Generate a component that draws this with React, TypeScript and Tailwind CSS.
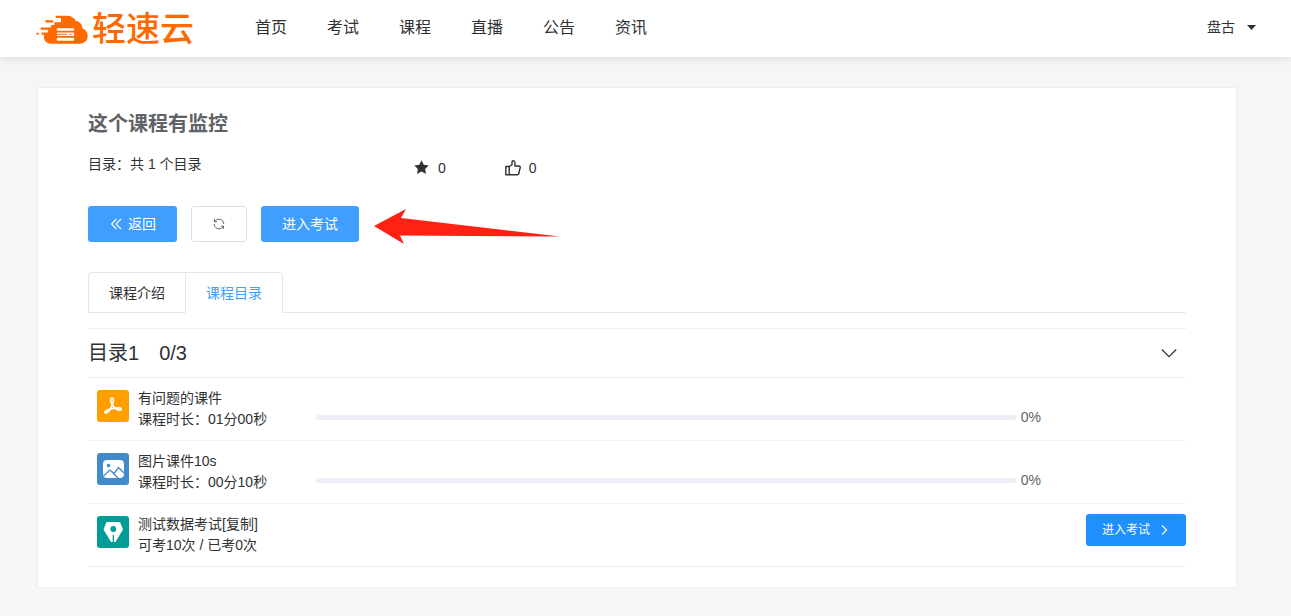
import React, { useState } from 'react';

const navItems = ['首页', '考试', '课程', '直播', '公告', '资讯'];

const lessons = [
  { id: 1, kind: 'pdf', title: '有问题的课件', detail: '课程时长：01分00秒', progress: 0 },
  { id: 2, kind: 'image', title: '图片课件10s', detail: '课程时长：00分10秒', progress: 0 },
  { id: 3, kind: 'exam', title: '测试数据考试[复制]', detail: '可考10次 / 已考0次', progress: null },
];

const Logo: React.FC = () => (
  <a href="#" className="flex items-center gap-1 pt-0.5 text-[#ff6a00]">
    <svg viewBox="47 44 156 88" className="h-[29px] w-[52px]" fill="none">
      <path
        fill="#ff6a00"
        d="M106 46H140C153 46 162 52 167 62C179 64 187 72 187 85C197 88 203 97 203 107C203 121 193 131 180 131H92C79 131 70 122 70 110V104H63V97H82V89H60V82H92V74H102V67H76V60H98V66H122V53H106Z"
      />
      <path stroke="#ff6a00" strokeWidth="6" d="M47 100.500H55M75 63H82" />
      <rect x="109" y="84" width="53" height="8" rx="3" fill="#fff" />
      <rect x="109" y="97" width="53" height="11" rx="3" fill="#fff" />
      <rect x="109" y="113" width="53" height="9" rx="3" fill="#fff" />
      <path stroke="#ff6a00" strokeWidth="3" d="M109 102.500H140M147 102.500H154" />
    </svg>
    <span className="text-[34px] leading-[40px] font-medium">轻速云</span>
  </a>
);

const StarIcon = () => (
  <svg viewBox="0 0 16 16" className="size-4" fill="#303133">
    <path d="M7.500.3l2.200 4.500 5 .7-3.600 3.500.9 5-4.500-2.400L3 14l.9-5L.3 5.500l5-.7z" />
  </svg>
);

const ThumbIcon = () => (
  <svg viewBox="0 0 16 16" className="size-4" fill="none" stroke="#303133" strokeWidth="1.400" strokeLinejoin="round">
    <path d="M.8 6.500h3.400v8.200H.8zM4.200 6.800L7 4.800V2.200C7 1.300 7.500.8 8.200.8c1.200 0 1.700.8 1.700 1.800V6h4c1 0 1.500.7 1.300 1.500l-1.400 6c-.2.800-.7 1.200-1.400 1.200H4.200" />
  </svg>
);

const BackIcon = () => (
  <svg viewBox="0 0 14 14" className="size-3.5" fill="none" stroke="currentColor" strokeWidth="1.100">
    <path d="M7.500 2L2.500 7l5 5M12 2L7 7l5 5" />
  </svg>
);

const RefreshIcon = () => (
  <svg viewBox="0 0 14 14" className="size-3.5" fill="none" stroke="#606266">
    <path d="M2.500 2.200v2.600h2.600M2.700 4.600C3.600 3 5.100 2.200 7 2.200c2.600 0 4.800 2.100 4.800 4.800M11.500 11.800V9.200H8.900M11.300 9.400C10.400 11 8.900 11.800 7 11.800 4.400 11.800 2.200 9.700 2.200 7" />
  </svg>
);

const ArrowMark = () => (
  <svg viewBox="0 0 188 36" className="h-9 w-[188px] overflow-visible" fill="#ff2113">
    <path d="M1 20L33 3L28 12L187 30.500L27 29.500L31 38Z" />
  </svg>
);

const LessonIcon: React.FC<{ kind: string }> = ({ kind }) => {
  if (kind === 'pdf') {
    return (
      <svg viewBox="0 0 32 32" className="size-8 rounded-[3px] bg-[#ffa000]" fill="none" stroke="#fff" strokeWidth="1.700">
        <path d="M14.800 14C13.500 11 13 8 15 8s1.800 3 .4 6.500C13.900 18.500 11.500 23 9 23c-2 0-1.200-2.300 3-3.600 3.500-1.200 7-1.900 10.200-1.500 3 .4 2.300 2.300.3 2.200-3.500-.2-6-3-7.700-6.100z" />
      </svg>
    );
  }
  if (kind === 'image') {
    return (
      <svg viewBox="0 0 32 32" className="size-8 rounded-[3px] bg-[#428bca]" fill="none">
        <rect x="6" y="7" width="21" height="18" rx="4" fill="#fff" />
        <circle cx="11.500" cy="12.500" r="1.800" fill="#428bca" />
        <path d="M6.500 23l6.500-6 4 3.500 4.500-6 5.500 5.500M15 19l6 6" stroke="#428bca" strokeWidth="1.300" />
      </svg>
    );
  }
  return (
    <svg viewBox="0 0 32 32" className="size-8 rounded-[3px] bg-[#009c95]" fill="#fff">
      <path d="M9.500 6H23l3 7.500L18.500 26H17v-7h-1.300v7H14L6.500 13.500z" />
      <circle cx="16.300" cy="13" r="2.900" fill="#009c95" />
    </svg>
  );
};

export default function App() {
  const [tab, setTab] = useState('catalog');
  const [open, setOpen] = useState(true);

  return (
    <div className="min-h-screen bg-[#f6f6f6] font-['Liberation_Sans','Noto_Sans_CJK_SC',sans-serif] text-sm text-[#303133]">
      <header className="flex h-[57px] items-center bg-white pr-[35px] pb-px pl-9 shadow-[0_2px_8px_rgba(0,0,0,0.1)]">
        <Logo />
        <nav className="ml-[61px] flex gap-10 text-base">
          {navItems.map((item) => (
            <a key={item} href="#" className="leading-6">
              {item}
            </a>
          ))}
        </nav>
        <button className="ml-auto flex items-center gap-3 pb-0.5">
          盘古
          <svg viewBox="0 0 9 5" className="h-[5px] w-[9px]" fill="#303133">
            <path d="M0 0h9L4.500 5z" />
          </svg>
        </button>
      </header>

      <div className="pt-[30px] pr-[17px] pb-7">
        <main className="mx-auto max-w-[1200px] border border-[#ebeef5] bg-white px-[50px] pt-[21px] pb-5">
          <h1 className="text-xl leading-[30px] font-bold text-[#606266]">这个课程有监控</h1>

          <div className="mt-[15px] flex items-start">
            <p className="w-[326px] leading-5">目录：共 1 个目录</p>
            <div className="flex gap-[59px] pt-1 leading-5">
              <span className="flex items-center gap-2">
                <StarIcon />0
              </span>
              <span className="flex items-center gap-2">
                <ThumbIcon />0
              </span>
            </div>
          </div>

          <div className="mt-7 flex gap-3.5">
            <button className="flex h-9 items-center gap-[5px] rounded-[3px] bg-[#409eff] px-[21px] text-white">
              <BackIcon />
              返回
            </button>
            <button aria-label="刷新" className="flex h-9 w-14 items-center justify-center rounded-[3px] border border-[#dcdfe6] bg-white">
              <RefreshIcon />
            </button>
            <button className="h-9 rounded-[3px] bg-[#409eff] px-[21px] text-white">进入考试</button>
            <ArrowMark />
          </div>

          <div className="mt-[30px] flex border-b border-[#e4e7ed]">
            <div role="tablist" className="-mb-px flex rounded-t-[4px] border border-b-0 border-[#e4e7ed]">
              <button
                role="tab"
                aria-selected={tab === 'intro'}
                onClick={() => setTab('intro')}
                className={tab === 'intro' ? 'h-10 bg-white px-5 text-[#409eff]' : 'h-10 border-b border-[#e4e7ed] px-5'}
              >
                课程介绍
              </button>
              <button
                role="tab"
                aria-selected={tab === 'catalog'}
                onClick={() => setTab('catalog')}
                className={
                  tab === 'catalog'
                    ? 'h-10 border-l border-[#e4e7ed] bg-white px-5 text-[#409eff]'
                    : 'h-10 border-b border-l border-[#e4e7ed] px-5'
                }
              >
                课程目录
              </button>
            </div>
          </div>

          <section className="mt-[15px] border-t border-[#ebeef5]">
            <button
              aria-expanded={open}
              onClick={() => setOpen(!open)}
              className="flex h-[49px] w-full items-center border-b border-[#ebeef5] pr-[9px] text-xl"
            >
              <span>目录1</span>
              <span className="ml-5">0/3</span>
              <svg viewBox="0 0 16 10" className="ml-auto h-2.5 w-4" fill="none" stroke="#303133" strokeWidth="1.200">
                <path d="M.8 1.500L8 8.700 15.200 1.500" />
              </svg>
            </button>
            {open && (
              <ul>
                {lessons.map((lesson) => (
                  <li key={lesson.id} className="flex h-[63px] items-start border-b border-[#f0f2f5] pt-2.5 pl-[9px] last:border-[#ebeef5]">
                    <div className="pt-0.5">
                      <LessonIcon kind={lesson.kind} />
                    </div>
                    <div className="ml-[9px] w-[178px] leading-[21px]">
                      <div>{lesson.title}</div>
                      <div>{lesson.detail}</div>
                    </div>
                    {lesson.progress !== null ? (
                      <div className="mr-[145px] flex flex-1 items-center gap-[5px] pt-5 leading-[18px] text-[#606266]">
                        <div className="h-[5px] flex-1 overflow-hidden rounded-full bg-[#ebeef5]">
                          <div className="h-full bg-[#409eff]" style={{ width: `${lesson.progress}%` }} />
                        </div>
                        {lesson.progress}%
                      </div>
                    ) : (
                      <button className="ml-auto flex h-8 w-[100px] items-center justify-center gap-2 rounded-[3px] bg-[#1e90ff] text-xs text-white">
                        进入考试
                        <svg viewBox="0 0 12 12" className="size-3" fill="none" stroke="currentColor" strokeWidth="1.200">
                          <path d="M4 1.500L8.500 6 4 10.500" />
                        </svg>
                      </button>
                    )}
                  </li>
                ))}
              </ul>
            )}
          </section>
        </main>
      </div>
    </div>
  );
}
